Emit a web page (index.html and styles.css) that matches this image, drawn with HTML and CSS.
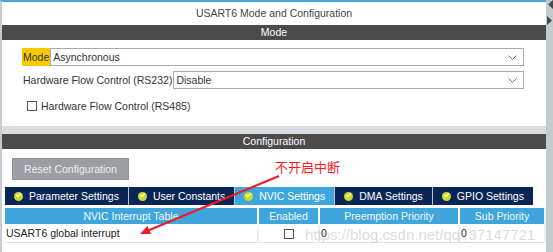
FILE: index.html
```html
<!DOCTYPE html>
<html lang="zh-CN">
<head>
  <meta charset="UTF-8">
  <title>USART6 Mode and Configuration</title>
  <link rel="stylesheet" href="styles.css">
</head>
<body>

<div class="window">
  <div class="main">
    <div class="title">USART6 Mode and Configuration</div>
    <div class="bar">Mode</div>

    <div class="mode-panel">
      <div class="row">
        <span class="label hl">Mode</span>
        <div class="select">
          <span>Asynchronous</span>
          <svg class="chev" width="9" height="5" viewBox="0 0 9 5"><polyline points="0.5,0.5 4.5,4.5 8.5,0.5" fill="none" stroke="#777" stroke-width="1"/></svg>
        </div>
      </div>
      <div class="row">
        <span class="label">Hardware Flow Control (RS232)</span>
        <div class="select">
          <span>Disable</span>
          <svg class="chev" width="9" height="5" viewBox="0 0 9 5"><polyline points="0.5,0.5 4.5,4.5 8.5,0.5" fill="none" stroke="#777" stroke-width="1"/></svg>
        </div>
      </div>
      <div class="check-row">
        <span class="box"></span>
        <span>Hardware Flow Control (RS485)</span>
      </div>
    </div>

    <div class="gap"></div>
    <div class="bar">Configuration</div>

    <div class="config-panel">
      <button class="reset">Reset Configuration</button>

      <div class="tabs">
        <div class="tab"><span class="ok"></span>Parameter Settings</div>
        <div class="tab"><span class="ok"></span>User Constants</div>
        <div class="tab active"><span class="ok"></span>NVIC Settings</div>
        <div class="tab"><span class="ok"></span>DMA Settings</div>
        <div class="tab"><span class="ok"></span>GPIO Settings</div>
      </div>

      <div class="nvic">
        <div class="th">NVIC Interrupt Table</div>
        <div class="th">Enabled</div>
        <div class="th">Preemption Priority</div>
        <div class="th">Sub Priority</div>
        <div class="td">USART6 global interrupt</div>
        <div class="td center"><span class="box"></span></div>
        <div class="td">0</div>
        <div class="td">0</div>
      </div>
    </div>
  </div>

  <div class="side">
    <svg width="7" height="28" viewBox="0 0 7 28">
      <polygon points="7,0 2,4.5 7,9" fill="#4a4a4a"/>
      <polygon points="1,16 6,20.5 1,25" fill="#4a4a4a"/>
    </svg>
  </div>

  <span class="watermark">https://blog.csdn.net/qq_37147721</span>
  <span class="note">不开启中断</span>
  <svg class="arrow" width="553" height="252" viewBox="0 0 553 252">
    <line x1="279" y1="176" x2="147" y2="231" stroke="#ec1c24" stroke-width="2"/>
    <polygon points="140,234 151,234 147.5,226" fill="#ec1c24"/>
  </svg>
</div>

</body>
</html>
```

FILE: styles.css
```css
body {
  margin: 0;
  font-family: 'Liberation Sans', Arial, sans-serif;
  font-size: 10.5px;
  color: #333;
}
.window {
  position: relative;
  display: flex;
  width: 553px;
  height: 252px;
  overflow: hidden;
  background: #fff;
}
.main {
  flex: 1;
  min-width: 0;
  display: flex;
  flex-direction: column;
  border-top: 2px solid #45a6dd;
  border-left: 2px solid #c6cdd1;
}
.side {
  width: 7px;
  flex: none;
  background: #c3cbcf;
}
.side svg {
  display: block;
}
.title {
  height: 23px;
  line-height: 23px;
  text-align: center;
  color: #444;
}
.bar {
  height: 15px;
  line-height: 15px;
  background: #4b4b4b;
  color: #fff;
  text-align: center;
}
.mode-panel {
  height: 86px;
  padding: 8px 22px 0 20px;
  box-sizing: border-box;
  display: flex;
  flex-direction: column;
  gap: 5px;
}
.row {
  display: flex;
  align-items: center;
  height: 18px;
}
.label {
  height: 18px;
  line-height: 18px;
  padding: 0 1px;
  white-space: nowrap;
}
.hl {
  background: #f8c800;
}
.select {
  flex: 1;
  height: 18px;
  box-sizing: border-box;
  border: 1px solid #a9a9a9;
  display: flex;
  align-items: center;
  justify-content: space-between;
  padding: 0 6px 0 2px;
  color: #333;
}
.check-row {
  display: flex;
  align-items: center;
  gap: 4px;
  padding: 6px 0 0 5px;
}
.box {
  display: inline-block;
  width: 8px;
  height: 8px;
  border: 1px solid #555;
  background: #fff;
}
.gap {
  height: 8px;
  background: #d8dee1;
}
.config-panel {
  flex: 1;
  display: flex;
  flex-direction: column;
  align-items: flex-start;
  padding: 9px 0 0 3px;
}
.reset {
  margin-left: 7px;
  width: 117px;
  height: 22px;
  background: #9b9fa3;
  border: 1px solid #8e9296;
  color: #eceff1;
  font-family: inherit;
  font-size: 10.5px;
  padding: 0;
}
.tabs {
  display: flex;
  gap: 1px;
  margin-top: 7px;
  background: #b8c4cc;
}
.tab {
  display: flex;
  align-items: center;
  gap: 6px;
  height: 18px;
  padding: 0 9px;
  background: #0b2656;
  color: #fff;
  white-space: nowrap;
}
.tab.active {
  background: #3ea6dc;
}
.ok {
  position: relative;
  width: 9px;
  height: 9px;
  border-radius: 50%;
  background: #cddc2a;
}
.ok::after {
  content: '';
  position: absolute;
  left: 2px;
  top: 1.5px;
  width: 4px;
  height: 2px;
  border-left: 1.5px solid #fff;
  border-bottom: 1.5px solid #fff;
  transform: rotate(-45deg);
}
.nvic {
  display: grid;
  grid-template-columns: 252px 59px 138px 84px;
  column-gap: 2px;
  margin-top: 3px;
  border-right: 2px solid #eef0f2;
}
.th {
  height: 16px;
  line-height: 16px;
  background: #3ea6dc;
  color: #f4f9fc;
  text-align: center;
}
.td {
  height: 17px;
  line-height: 17px;
  margin-top: 1px;
  border-bottom: 1px solid #e2e4e6;
  box-shadow: 2px 0 0 #eceeef;
  color: #222;
  padding-left: 1px;
}
.td.center {
  display: flex;
  align-items: center;
  justify-content: center;
  padding: 0;
}
.watermark {
  position: absolute;
  left: 305px;
  top: 226px;
  font-size: 15px;
  color: rgba(190, 190, 190, 0.55);
  white-space: nowrap;
}
.note {
  position: absolute;
  left: 275px;
  top: 157px;
  font-family: 'Noto Sans CJK SC', sans-serif;
  font-size: 13px;
  color: #ff1a1a;
}
.arrow {
  position: absolute;
  left: 0;
  top: 0;
  pointer-events: none;
}
```
